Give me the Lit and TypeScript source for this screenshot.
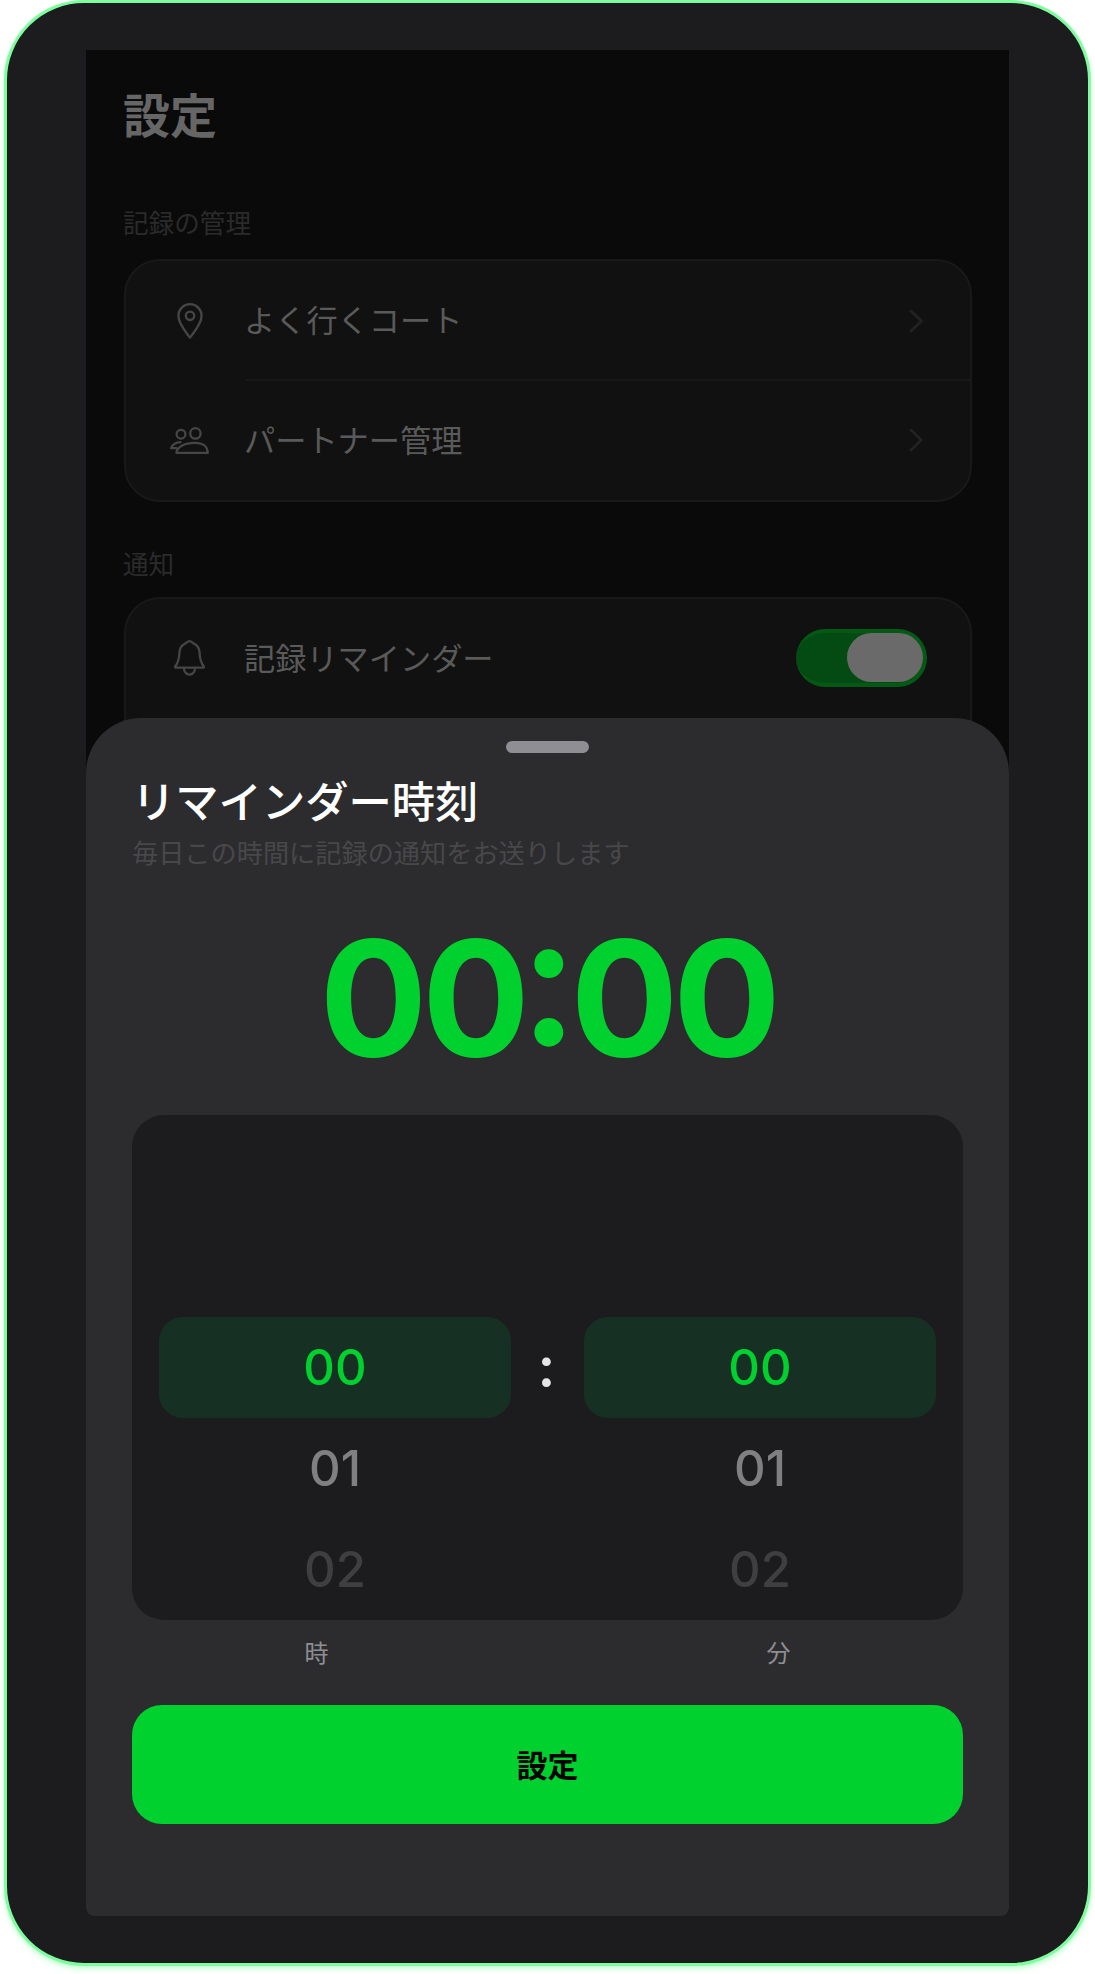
import { LitElement, html, css } from "lit";
import { customElement } from "lit/decorators.js";

const pin = html`<svg width="26" height="36" viewBox="0 0 26 36" fill="none" stroke="#464646" stroke-width="2.3" stroke-linejoin="round"><path d="M13 34.6C8.6 28.6 1.4 21 1.4 12.8a11.6 11.6 0 0 1 23.2 0C24.6 21 17.4 28.6 13 34.6Z"/><circle cx="13" cy="12.8" r="4.2"/></svg>`;
const people = html`<svg width="39" height="27" viewBox="0 0 39 27" fill="none" stroke="#464646" stroke-width="2.3" stroke-linecap="round" stroke-linejoin="round"><circle cx="11" cy="7.2" r="4.4"/><circle cx="25.4" cy="6.4" r="5.2"/><path d="M10.5 15.2C6.2 15.4 2.4 17.6 1.2 21.2H6.6"/><path d="M6.4 25.8C7 20.4 14 15.8 24.6 15.8S37.4 20.4 37.8 25.8Z"/></svg>`;
const bell = html`<svg width="31" height="36" viewBox="0 0 31 36" fill="none" stroke="#464646" stroke-width="2.3" stroke-linecap="round" stroke-linejoin="round"><path d="M15.5 1.2C13.5 1.2 12.5 3 10.5 4C7.5 5.5 5.8 8 5.5 12C5.2 18 4.5 23 1.2 26.3Q.8 27.6 2 27.6H29Q30.2 27.6 29.8 26.3C26.5 23 25.8 18 25.5 12C25.2 8 23.5 5.5 20.5 4C18.5 3 17.5 1.2 15.5 1.2Z"/><path d="M10 28.4a5.5 6.2 0 0 0 11 0"/></svg>`;
const chevron = html`<svg width="14" height="24" viewBox="0 0 14 24" fill="none" stroke="#222" stroke-width="3" stroke-linecap="round" stroke-linejoin="round"><path d="M2 2L12.4 12L2 22"/></svg>`;

@customElement("app-root")
export class AppRoot extends LitElement {
  static styles = css`
    :host { display: block; width: 1095px; height: 1974px; background: #fff; font-family: "Noto Sans CJK JP", "Noto Sans", sans-serif; }
    .frame { box-sizing: border-box; margin-left: 4px; width: 1087px; height: 1966px; border: 3px solid #7dfd9e; border-radius: 80px; background: #1c1c1e; padding: 47px 79px 47px; box-shadow: 0 3px 5px rgba(125,253,158,.45); }
    .screen { position: relative; height: 1866px; background: #0a0a0a; overflow: hidden; border-radius: 0 0 8px 8px; padding: 0 38px; box-sizing: border-box; }
    h1 { margin: 0 0 0 -1px; padding-top: 29.5px; font-size: 47px; line-height: 66px; font-weight: 700; color: #666; }
    .label { font-size: 25.6px; line-height: 36px; color: #2b2b2b; margin: 58.5px 0 19px -1px; }
    .label.second { margin: 43px 0 16px -1px; }
    .card { box-sizing: border-box; width: 848px; background: #111; border: 2px solid #191919; border-radius: 36px; }
    .card.open { height: 300px; }
    .row { display: flex; align-items: center; height: 119.4px; position: relative; }
    .row + .row::before { content: ""; position: absolute; left: 119px; right: 0; top: -1px; border-top: 2px solid #181818; }
    .ico { width: 118px; flex: none; display: flex; justify-content: center; padding-left: 9.5px; box-sizing: border-box; }
    .txt { flex: 1; font-size: 31.2px; line-height: 46px; padding-bottom: 2.5px; color: #5a5a5a; font-weight: 400; }
    .chev { margin-right: 47px; display: flex; }
    .toggle { box-sizing: border-box; width: 131.5px; height: 58px; border-radius: 29px; background: #034b12; border: 4.5px solid #045a14; border-left: 0; margin-right: 43px; display: flex; justify-content: flex-end; }
    .thumb { width: 76px; height: 49px; border-radius: 25px; background: #6a6a6a; }
    .sheet { position: absolute; left: 0; right: 0; bottom: 0; height: 1198px; box-sizing: border-box; background: #2c2c2e; border-radius: 55px 55px 0 0; padding: 23px 46px 0; }
    .handle { width: 83px; height: 12px; border-radius: 6px; background: #8e8e93; margin: 0 auto; }
    h2 { margin: 13.5px 0 0; font-size: 43.3px; line-height: 64px; font-weight: 500; color: #fff; }
    .sub { font-size: 26.2px; line-height: 38px; color: #48484a; margin-top: 2.8px; }
    .big { font-family: Inter, "Liberation Sans", sans-serif; display: flex; justify-content: center; font-size: 160px; line-height: 200px; font-weight: 690; color: #00d12f; margin-top: 26.9px; letter-spacing: -5.4px; }
    .big .c { font-size: 184px; font-weight: 560; letter-spacing: -7.5px; font-feature-settings: "case"; margin-left: -5px; }
    .picker { box-sizing: border-box; height: 505px; background: #1c1c1e; border-radius: 32px; padding: 202.5px 27px 0; display: flex; margin-top: 16.5px; font-family: Inter, "Liberation Sans", sans-serif; overflow: hidden; }
    .col { flex: none; width: 352px; }
    .sep { flex: 1; text-align: center; font-size: 56px; line-height: 100px; font-weight: 600; color: #e5e5e5; padding-right: 2px; }
    .item { height: 100.5px; display: flex; align-items: center; justify-content: center; font-size: 49px; font-weight: 550; border-radius: 24px; }
    .item.sel { background: #163124; color: #00d12f; font-weight: 500; height: 101px; }
    .item.n1 { color: #808082; height: 101px; }
    .item.n2 { color: #3f3f41; }
    .units { display: grid; grid-template-columns: 369px 369px; justify-content: space-between; font-size: 24px; line-height: 36px; color: #8e8e93; text-align: center; margin-top: 14.5px; }
    .btn { box-sizing: border-box; padding-bottom: 2px; display: flex; align-items: center; justify-content: center; height: 119px; margin-top: 34.7px; border-radius: 30px; background: #00d12f; color: #000; font-size: 31px; font-weight: 700; }
  `;

  col() {
    return html`<div class="col">
      <div class="item sel">00</div>
      <div class="item n1">01</div>
      <div class="item n2">02</div>
    </div>`;
  }

  render() {
    return html`<div class="frame"><div class="screen">
      <h1>設定</h1>
      <div class="label">記録の管理</div>
      <div class="card">
        <div class="row"><div class="ico">${pin}</div><div class="txt">よく行くコート</div><div class="chev">${chevron}</div></div>
        <div class="row"><div class="ico">${people}</div><div class="txt">パートナー管理</div><div class="chev">${chevron}</div></div>
      </div>
      <div class="label second">通知</div>
      <div class="card open">
        <div class="row"><div class="ico">${bell}</div><div class="txt">記録リマインダー</div><div class="toggle"><div class="thumb"></div></div></div>
      </div>
      <div class="sheet">
        <div class="handle"></div>
        <h2>リマインダー時刻</h2>
        <div class="sub">毎日この時間に記録の通知をお送りします</div>
        <div class="big"><span>00</span><span class="c">:</span><span>00</span></div>
        <div class="picker">${this.col()}<div class="sep">:</div>${this.col()}</div>
        <div class="units"><div>時</div><div>分</div></div>
        <div class="btn">設定</div>
      </div>
    </div></div>`;
  }
}
